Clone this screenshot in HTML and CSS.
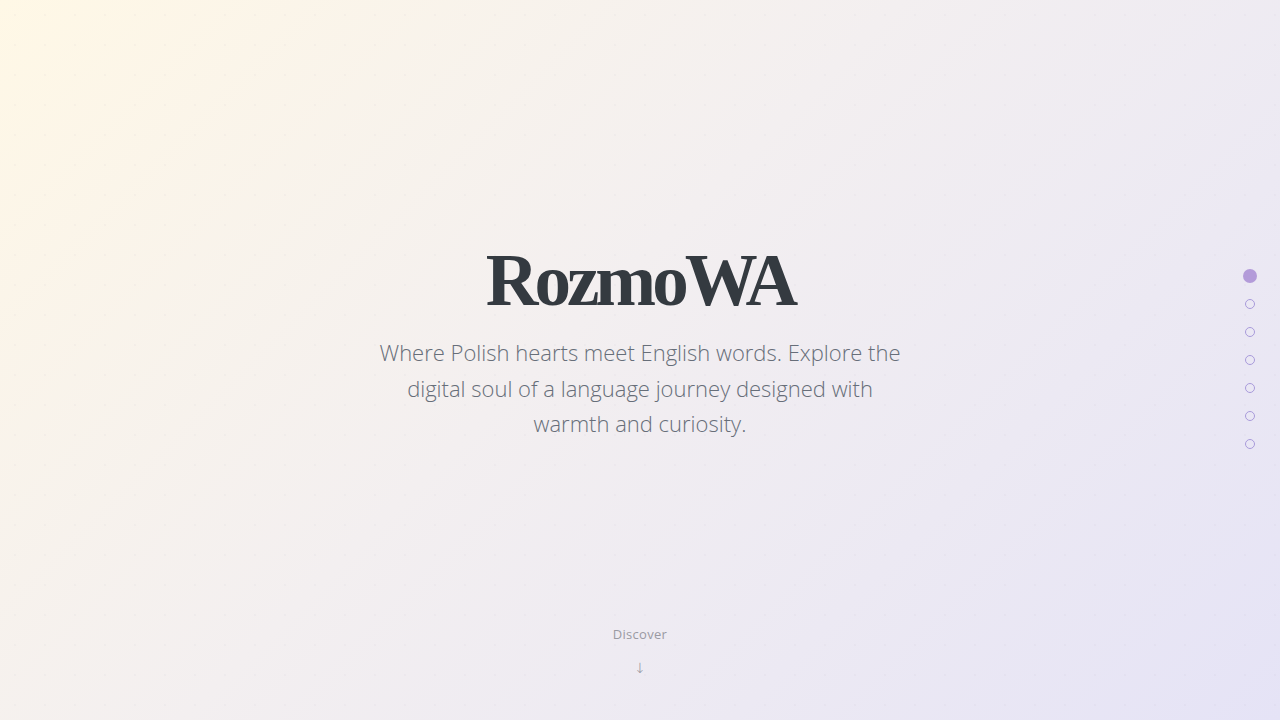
FILE: index.html
```html
<!DOCTYPE html>
<html lang="en">
<head>
<meta charset="utf-8">
<title>RozmoWA</title>
<link rel="stylesheet" href="styles.css">
</head>
<body>
<main class="hero">
  <div class="hero-content">
    <h1 class="title">RozmoWA</h1>
    <p class="subtitle">Where Polish hearts meet English words. Explore the digital soul of a language journey designed with warmth and curiosity.</p>
  </div>
  <div class="discover">
    <span class="discover-label">Discover</span>
    <span class="discover-arrow">↓</span>
  </div>
</main>
<nav class="dots">
  <span class="dot active"></span>
  <span class="dot"></span>
  <span class="dot"></span>
  <span class="dot"></span>
  <span class="dot"></span>
  <span class="dot"></span>
  <span class="dot"></span>
</nav>
</body>
</html>
```
FILE: styles.css
```css
html, body {
  margin: 0;
  padding: 0;
  height: 100%;
}
body {
  font-family: "Open Sans", "Liberation Sans", sans-serif;
  background-color: #f3f0f1;
  background-image:
    radial-gradient(circle, rgba(120, 110, 140, 0.04) 1px, transparent 1.5px),
    linear-gradient(135deg, #fff8e6 0%, #f3eff0 45%, #e5e3f6 100%);
  background-size: 30px 30px, 100% 100%;
  background-position: 0 0, 0 0;
  overflow: hidden;
}
.hero {
  position: relative;
  height: 720px;
  display: flex;
  align-items: center;
  justify-content: center;
}
.hero-content {
  display: flex;
  flex-direction: column;
  align-items: center;
  text-align: center;
  padding-bottom: 42px;
}
.title {
  margin: 0;
  font-family: "Liberation Serif", "DejaVu Serif", serif;
  font-weight: 700;
  font-size: 73px;
  line-height: 90px;
  letter-spacing: -4px;
  color: #343a40;
}
.subtitle {
  margin: 9px 0 0;
  max-width: 530px;
  font-family: "Open Sans", sans-serif;
  font-weight: 300;
  font-size: 22px;
  line-height: 35.5px;
  color: #676e79;
}
.discover {
  position: absolute;
  left: 0;
  right: 0;
  bottom: 44px;
  display: flex;
  flex-direction: column;
  align-items: center;
  gap: 18px;
  color: #9a9aa2;
}
.discover-label {
  font-size: 13px;
  line-height: 16px;
  letter-spacing: 0.3px;
}
.discover-arrow {
  font-family: "DejaVu Sans", sans-serif;
  font-weight: 300;
  font-size: 14px;
  line-height: 16px;
  color: #8d8d96;
}
.dots {
  position: fixed;
  right: 23px;
  top: 269px;
  display: flex;
  flex-direction: column;
  align-items: center;
  gap: 14px;
}
.dot {
  width: 10px;
  height: 10px;
  box-sizing: border-box;
  border: 1px solid #a89ada;
  border-radius: 50%;
  margin: 2px 0;
}
.dot.active {
  width: 14px;
  height: 14px;
  margin: 0;
  border: none;
  background: #b39bd9;
}
```
